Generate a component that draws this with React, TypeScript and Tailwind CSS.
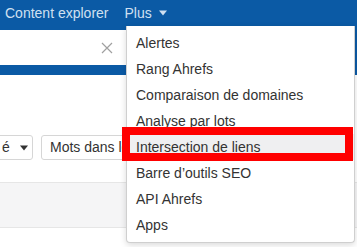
export default function App() {
  const items = [
    "Alertes",
    "Rang Ahrefs",
    "Comparaison de domaines",
    "Analyse par lots",
    "Intersection de liens",
    "Barre d’outils SEO",
    "API Ahrefs",
    "Apps",
  ];
  return (
    <div className="relative w-[357px] h-[247px] overflow-hidden bg-white font-['Liberation_Sans',Arial,sans-serif]">
      <div className="bg-[#0b5aa5] h-[75px] flex flex-col">
        <div className="h-[26px] flex items-center pl-[5px] text-[14px] text-[#d0e0f1] whitespace-nowrap">
          <span>Content explorer</span>
          <span className="ml-[16px] flex items-center gap-[7px]">
            Plus
            <svg width="8" height="6" viewBox="0 0 8 6">
              <path d="M0 0.5 L8 0.5 L4 5.5 Z" fill="#d0e0f1" />
            </svg>
          </span>
        </div>
        <div className="mt-[4px] h-[35px] w-[126px] bg-white flex items-center justify-end pr-[13px]">
          <svg width="12" height="12" viewBox="0 0 12 12">
            <path d="M1 1 L11 11 M11 1 L1 11" stroke="#a0a0a0" strokeWidth="1.2" />
          </svg>
        </div>
      </div>
      <div className="pt-[60px]">
        <div className="flex gap-[8px] h-[25px] text-[14px] text-[#333]">
          <div className="ml-[-10px] w-[43px] border border-[#d6d6d6] rounded-[3px] flex items-center pl-[11px] gap-[10px]">
            <span>é</span>
            <svg width="8" height="6" viewBox="0 0 8 6">
              <path d="M0 0.5 L8 0.5 L4 5.5 Z" fill="#333" />
            </svg>
          </div>
          <div className="w-[120px] border border-[#d6d6d6] rounded-[3px] flex items-center pl-[8px] whitespace-nowrap overflow-hidden">
            Mots dans le titre
          </div>
        </div>
        <div className="mt-[22px] h-[46px] bg-[#f5f5f6] border-y border-[#e6e6e6]" />
      </div>

      <div className="absolute left-[126px] top-[26px] w-[229px] bg-white border border-[#cfcfcf] border-t-0 rounded-b-[4px] shadow-[0_2px_6px_rgba(0,0,0,0.15)] py-[4px] text-[14px] text-[#333]">
        {items.map((it, i) => (
          <div
            key={it}
            className={`h-[26px] flex items-center pl-[9px] whitespace-nowrap ${i === 4 ? "bg-[#efeff1]" : ""}`}
          >
            {it}
          </div>
        ))}
      </div>
      <div className="absolute left-[122px] top-[127px] w-[231px] h-[34px] border-[8px] border-[#ff0000]" />
    </div>
  );
}
